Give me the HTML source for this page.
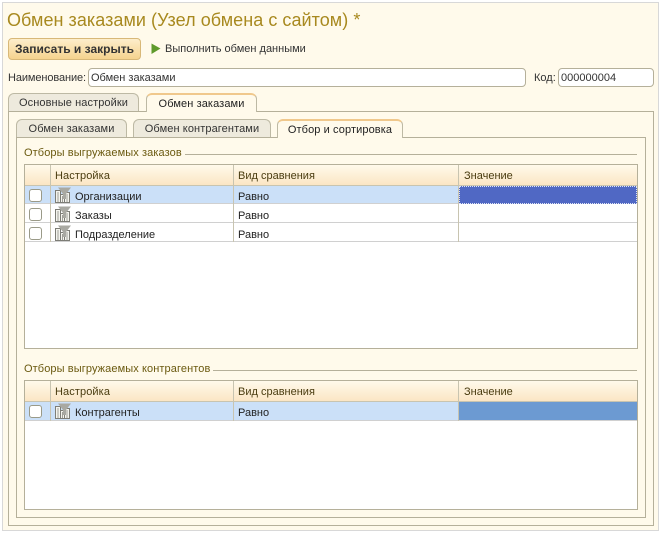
<!DOCTYPE html>
<html><head><meta charset="utf-8"><style>
html,body{margin:0;padding:0;background:#fff}
body{width:661px;height:533px;position:relative;overflow:hidden;font-family:"Liberation Sans","DejaVu Sans",sans-serif;font-size:11px;color:#222}
.a{position:absolute;box-sizing:border-box}
.t{position:absolute;white-space:nowrap;line-height:14px}
.tab{position:absolute;box-sizing:border-box;border:1px solid #bdb9a4;border-bottom:none;border-radius:6px 6px 0 0;background:#eeeadd;text-align:center;line-height:19px;color:#333;letter-spacing:.1px}
.on{background:#fffaeb;border-top:2px solid #f0c88c;z-index:3;color:#222;line-height:18px}
.inp{position:absolute;box-sizing:border-box;border:1px solid #b5b09a;border-radius:4px;background:#fff;line-height:18px;padding-left:2px}
.tbl{position:absolute;box-sizing:border-box;border:1px solid #b5b09a;background:#fff}
.hd{position:absolute;left:0;right:0;top:0;height:21px;background:linear-gradient(#fffaeb,#fbe6c4);border-bottom:1px solid #c8c4b0;box-sizing:border-box}
.v{position:absolute;width:1px;background:#c8c4b0}
.r{position:absolute;left:0;right:0;box-sizing:border-box;border-bottom:1px solid #d0d0d0}
.cb{position:absolute;width:13px;height:13px;box-sizing:border-box;border:1px solid #9a9a88;border-radius:3px;background:#fff}
.leg{position:absolute;color:#6b5a10;white-space:nowrap;background:#fffaeb;padding-right:3px;line-height:14px;letter-spacing:.1px}
.ln{position:absolute;height:1px;background:#b5b09a}
</style></head><body>
<div class="a" style="left:2px;top:2px;width:657px;height:529px;border:1px solid #d8d8d8;background:#fffaeb"></div>
<div class="t" style="left:7px;top:9px;font-size:18px;line-height:22px;color:#a8891f;letter-spacing:.05px">Обмен заказами (Узел обмена с сайтом) *</div>
<div class="a" style="left:8px;top:38px;width:133px;height:22px;border:1px solid #d8b878;border-radius:4px;background:linear-gradient(#fdeecb,#f5d38e);text-align:center;line-height:20px;font-weight:bold;color:#333;font-size:12px">Записать и закрыть</div>
<svg class="a" style="left:151px;top:43px" width="10" height="12"><path d="M0.500 0.500L9.500 5.500 0.500 11z" fill="#5f9a2c"/></svg>
<div class="t" style="left:165px;top:42px;color:#333">Выполнить обмен данными</div>
<div class="t" style="left:8px;top:71px;color:#333;letter-spacing:-.1px">Наименование:</div>
<div class="inp" style="left:88px;top:68px;width:438px;height:19px;color:#333">Обмен заказами</div>
<div class="t" style="left:534px;top:71px;color:#333">Код:</div>
<div class="inp" style="left:558px;top:68px;width:96px;height:19px;color:#333">000000004</div>

<div class="a" style="left:8px;top:111px;width:646px;height:415px;border:1px solid #b5b09a;background:#fffaeb"></div>
<div class="tab" style="left:8px;top:93px;width:131px;height:18px">Основные настройки</div>
<div class="tab on" style="left:146px;top:93px;width:111px;height:19px">Обмен заказами</div>
<div class="a" style="left:16px;top:137px;width:630px;height:381px;border:1px solid #b5b09a;background:#fffaeb"></div>
<div class="tab" style="left:16px;top:119px;width:111px;height:18px">Обмен заказами</div>
<div class="tab" style="left:133px;top:119px;width:138px;height:18px">Обмен контрагентами</div>
<div class="tab on" style="left:277px;top:119px;width:126px;height:19px">Отбор и сортировка</div>

<div class="ln" style="left:24px;top:154px;width:613px"></div>
<div class="leg" style="left:24px;top:146px">Отборы выгружаемых заказов</div>
<div class="tbl" style="left:24px;top:164px;width:614px;height:185px">
<div class="hd"></div>
<div class="r" style="top:21px;height:18px;background:#cbe0f8"></div>
<div class="r" style="top:39px;height:19px"></div>
<div class="r" style="top:58px;height:19px"></div>
<div class="v" style="left:25px;top:0;height:77px"></div>
<div class="v" style="left:208px;top:0;height:77px"></div>
<div class="v" style="left:433px;top:0;height:77px"></div>
<div class="a" style="left:434px;top:21px;width:178px;height:18px;background:#5068c4;border:1px dotted #dfe4f4"></div>
</div>
<div class="t" style="left:55px;top:169px;color:#4a3c10;letter-spacing:.1px">Настройка</div>
<div class="t" style="left:238px;top:169px;color:#4a3c10">Вид сравнения</div>
<div class="t" style="left:464px;top:169px;color:#4a3c10">Значение</div>
<div class="cb" style="left:29px;top:189px"></div>
<div class="cb" style="left:29px;top:208px"></div>
<div class="cb" style="left:29px;top:227px"></div>
<svg class="a" style="left:55px;top:187px" width="16" height="16"><path d="M0.500 3.500h5v12h-5zM5.500 7.500h4v8h-4zM9.500 5.500h5v10h-5z" fill="#f4f4ee" stroke="#7d7d76"/><path d="M3 5v10M7.500 9v6M12 7v8" stroke="#a0a098"/><path d="M3 0.500H16L11 7V12H8V7z" fill="#a9a9a2"/></svg>
<svg class="a" style="left:55px;top:206px" width="16" height="16"><path d="M0.500 3.500h5v12h-5zM5.500 7.500h4v8h-4zM9.500 5.500h5v10h-5z" fill="#f4f4ee" stroke="#7d7d76"/><path d="M3 5v10M7.500 9v6M12 7v8" stroke="#a0a098"/><path d="M3 0.500H16L11 7V12H8V7z" fill="#a9a9a2"/></svg>
<svg class="a" style="left:55px;top:225px" width="16" height="16"><path d="M0.500 3.500h5v12h-5zM5.500 7.500h4v8h-4zM9.500 5.500h5v10h-5z" fill="#f4f4ee" stroke="#7d7d76"/><path d="M3 5v10M7.500 9v6M12 7v8" stroke="#a0a098"/><path d="M3 0.500H16L11 7V12H8V7z" fill="#a9a9a2"/></svg>
<div class="t" style="left:75px;top:190px">Организации</div>
<div class="t" style="left:238px;top:190px">Равно</div>
<div class="t" style="left:75px;top:209px">Заказы</div>
<div class="t" style="left:238px;top:209px">Равно</div>
<div class="t" style="left:75px;top:228px">Подразделение</div>
<div class="t" style="left:238px;top:228px">Равно</div>

<div class="ln" style="left:24px;top:370px;width:613px"></div>
<div class="leg" style="left:24px;top:362px">Отборы выгружаемых контрагентов</div>
<div class="tbl" style="left:24px;top:380px;width:614px;height:130px">
<div class="hd"></div>
<div class="r" style="top:21px;height:19px;background:#cbe0f8"></div>
<div class="v" style="left:25px;top:0;height:40px"></div>
<div class="v" style="left:208px;top:0;height:40px"></div>
<div class="v" style="left:433px;top:0;height:40px"></div>
<div class="a" style="left:434px;top:21px;width:178px;height:18px;background:#6c9ad2"></div>
</div>
<div class="t" style="left:55px;top:385px;color:#4a3c10;letter-spacing:.1px">Настройка</div>
<div class="t" style="left:238px;top:385px;color:#4a3c10">Вид сравнения</div>
<div class="t" style="left:464px;top:385px;color:#4a3c10">Значение</div>
<div class="cb" style="left:29px;top:405px"></div>
<svg class="a" style="left:55px;top:403px" width="16" height="16"><path d="M0.500 3.500h5v12h-5zM5.500 7.500h4v8h-4zM9.500 5.500h5v10h-5z" fill="#f4f4ee" stroke="#7d7d76"/><path d="M3 5v10M7.500 9v6M12 7v8" stroke="#a0a098"/><path d="M3 0.500H16L11 7V12H8V7z" fill="#a9a9a2"/></svg>
<div class="t" style="left:75px;top:406px">Контрагенты</div>
<div class="t" style="left:238px;top:406px">Равно</div>
</body></html>
